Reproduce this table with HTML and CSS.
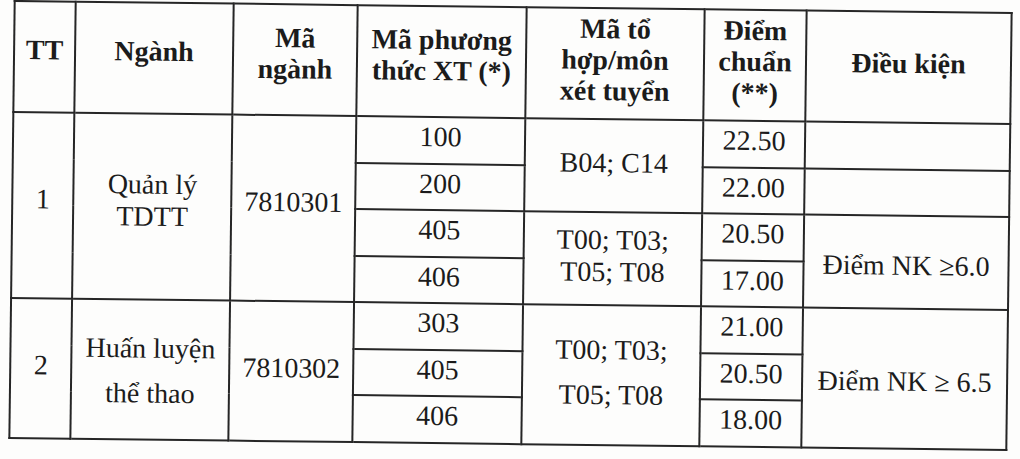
FILE: index.html
```html
<!DOCTYPE html>
<html>
<head>
<meta charset="utf-8">
<title>Điểm chuẩn</title>
<link rel="stylesheet" href="styles.css">
</head>
<body>
<div class="sheet">
  <table class="scores">
    <colgroup>
      <col class="c-tt">
      <col class="c-nganh">
      <col class="c-ma">
      <col class="c-pt">
      <col class="c-to">
      <col class="c-diem">
      <col class="c-dk">
    </colgroup>
    <thead>
      <tr class="head">
        <th class="h-up">TT</th>
        <th class="h-up">Ngành</th>
        <th class="h-up">Mã<br>ngành</th>
        <th class="h-up">Mã phương<br>thức XT (*)</th>
        <th>Mã tổ<br>hợp/môn<br>xét tuyển</th>
        <th>Điểm<br>chuẩn<br>(**)</th>
        <th>Điều kiện</th>
      </tr>
    </thead>
    <tbody>
      <tr>
        <td rowspan="4" class="up">1</td>
        <td rowspan="4" class="up">Quản lý<br>TDTT</td>
        <td rowspan="4" class="up">7810301</td>
        <td>100</td>
        <td rowspan="2">B04; C14</td>
        <td>22.50</td>
        <td></td>
      </tr>
      <tr>
        <td>200</td>
        <td>22.00</td>
        <td></td>
      </tr>
      <tr>
        <td>405</td>
        <td rowspan="2">T00; T03;<br>T05; T08</td>
        <td>20.50</td>
        <td rowspan="2" class="low">Điểm NK ≥6.0</td>
      </tr>
      <tr>
        <td>406</td>
        <td>17.00</td>
      </tr>
      <tr>
        <td rowspan="3">2</td>
        <td rowspan="3" class="loose shift">Huấn luyện<br>thể thao</td>
        <td rowspan="3">7810302</td>
        <td>303</td>
        <td rowspan="3" class="loose">T00; T03;<br>T05; T08</td>
        <td>21.00</td>
        <td rowspan="3" class="low">Điểm NK ≥ 6.5</td>
      </tr>
      <tr>
        <td>405</td>
        <td>20.50</td>
      </tr>
      <tr>
        <td>406</td>
        <td>18.00</td>
      </tr>
    </tbody>
  </table>
</div>
</body>
</html>
```
FILE: styles.css
```css
html, body {
  margin: 0;
  padding: 0;
  background: #fdfdfc;
  font-family: "Liberation Serif", serif;
}

.sheet {
  width: 1020px;
  height: 459px;
  padding: 6px 0 0 11px;
  box-sizing: border-box;
  overflow: hidden;
}

.scores {
  border-collapse: collapse;
  table-layout: fixed;
  width: 997px;
  font-family: "Liberation Serif", serif;
  font-size: 28px;
  line-height: 32px;
  color: #1b1b1b;
  transform: rotate(0.7deg);
  transform-origin: 50% 50%;
}

.c-tt { width: 61px; }
.c-nganh { width: 158px; }
.c-ma { width: 124px; }
.c-pt { width: 169px; }
.c-to { width: 178px; }
.c-diem { width: 102px; }
.c-dk { width: 205px; }

.scores th,
.scores td {
  border: 2px solid #262626;
  padding: 0;
  text-align: center;
  vertical-align: middle;
  font-family: "Liberation Serif", serif;
}

.scores th {
  font-weight: bold;
  line-height: 31px;
}

.head {
  height: 111px;
}

.head th {
  padding-bottom: 8px;
}

.head th.h-up {
  padding-bottom: 14px;
}

.scores tbody tr {
  height: 46.5px;
}

.scores tbody td {
  padding-bottom: 6px;
}

.scores td.up {
  padding-bottom: 12px;
}

.scores td.low {
  padding-top: 6px;
  padding-bottom: 0;
}

.scores td.loose {
  line-height: 45px;
}

.scores td.shift {
  padding-top: 2px;
  padding-bottom: 0;
}
```
